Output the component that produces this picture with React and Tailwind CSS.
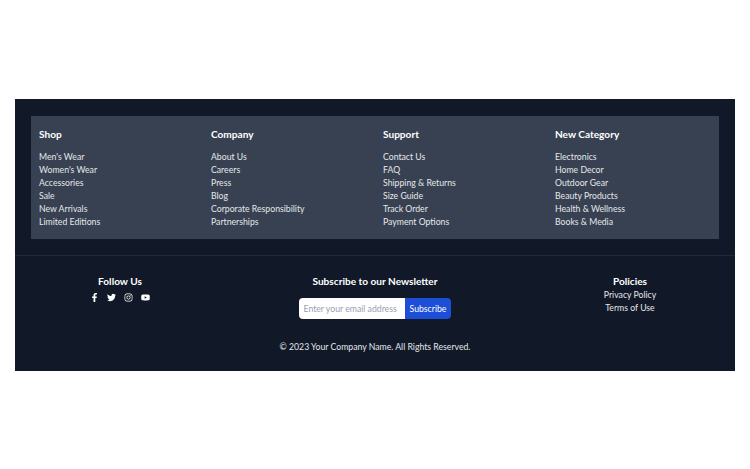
import { FaFacebookF, FaTwitter, FaInstagram, FaYoutube } from "react-icons/fa";

const cols = [
  ["Shop", ["Men's Wear", "Women's Wear", "Accessories", "Sale", "New Arrivals", "Limited Editions"]],
  ["Company", ["About Us", "Careers", "Press", "Blog", "Corporate Responsibility", "Partnerships"]],
  ["Support", ["Contact Us", "FAQ", "Shipping & Returns", "Size Guide", "Track Order", "Payment Options"]],
  ["New Category", ["Electronics", "Home Decor", "Outdoor Gear", "Beauty Products", "Health & Wellness", "Books & Media"]],
];

const icons = [FaFacebookF, FaTwitter, FaInstagram, FaYoutube];

export default function App() {
  return (
    <div className="h-[469px] w-[750px] bg-white pt-[99px] pl-[15px] font-['Lato',sans-serif]">
      <footer className="h-[272px] w-[720px] bg-[#111827] text-white">
        <div className="px-4 pt-[17px]">
          <div className="grid h-[123px] grid-cols-4 gap-4 bg-[#374151] p-2">
            {cols.map(([title, links]) => (
              <div key={title}>
                <h3 className="mb-[6px] text-[10.1px] leading-[20px] font-bold">{title}</h3>
                <ul className="text-[8.7px] leading-[13px] text-gray-200">
                  {links.map((l) => (
                    <li key={l}>{l}</li>
                  ))}
                </ul>
              </div>
            ))}
          </div>
        </div>
        <div className="mt-4 border-t border-[#1f2937] pt-[18px]">
          <div className="flex justify-between">
            <div className="w-[210px] text-center">
              <h3 className="text-[10.1px] leading-[15px] font-bold">Follow Us</h3>
              <div className="mt-[1px] flex h-[14px] items-center justify-center text-[9px]">
                {icons.map((Icon, i) => (
                  <span key={i} className="flex w-[17px] justify-center">
                    <Icon />
                  </span>
                ))}
              </div>
            </div>
            <div className="text-center">
              <h3 className="text-[10.1px] leading-[15px] font-bold">Subscribe to our Newsletter</h3>
              <div className="mt-[9px] flex justify-center">
                <input
                  readOnly
                  placeholder="Enter your email address"
                  className="h-[21px] w-[106px] rounded-l-[4px] bg-white px-[4.5px] text-[8.7px] text-gray-800 outline-none placeholder:text-gray-400"
                />
                <button className="h-[21px] w-[46px] rounded-r-[4px] bg-[#1d4ed8] text-[8.7px] text-white">Subscribe</button>
              </div>
            </div>
            <div className="w-[210px] text-center">
              <h3 className="text-[10.1px] leading-[15px] font-bold">Policies</h3>
              <ul className="-mt-[1px] text-[8.7px] leading-[13px] text-gray-200">
                <li>Privacy Policy</li>
                <li>Terms of Use</li>
              </ul>
            </div>
          </div>
          <p className="mt-[21px] text-center text-[8.7px] leading-[13px] text-gray-200">© 2023 Your Company Name. All Rights Reserved.</p>
        </div>
      </footer>
    </div>
  );
}
